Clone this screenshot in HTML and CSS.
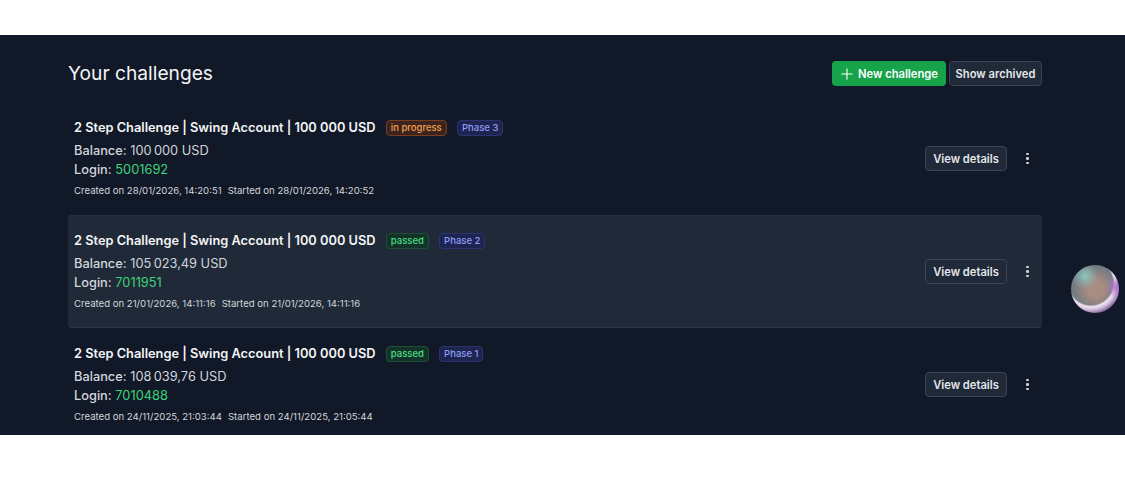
FILE: index.html
```html
<!DOCTYPE html>
<html lang="en">
<head>
  <meta charset="UTF-8" />
  <meta name="viewport" content="width=device-width, initial-scale=1.0"/>
  <title>Your challenges</title>
  <link rel="stylesheet" href="styles.css">
</head>
<body>
  <main class="panel">
    <header class="top">
      <h1>Your challenges</h1>
      <div class="top-actions">
        <button class="btn-new">
          <svg width="12" height="12" viewBox="0 0 12 12" fill="none" stroke="currentColor" stroke-width="1.1" stroke-linecap="round"><path d="M6 .8v10.4M.8 6h10.4"/></svg>
          New challenge
        </button>
        <button class="btn-dark btn-archived">Show archived</button>
      </div>
    </header>

    <section class="row">
      <div class="info">
        <div class="title">2 Step Challenge | Swing Account | 100 000 USD
          <span class="tag tag-orange">in progress</span>
          <span class="tag tag-blue">Phase 3</span>
        </div>
        <div class="line"><b>Balance:</b> 100&#8239;000 USD</div>
        <div class="line"><b>Login:</b> <span class="login">5001692</span></div>
        <div class="dates"><span>Created on 28/01/2026, 14:20:51</span><span>Started on 28/01/2026, 14:20:52</span></div>
      </div>
      <button class="btn-dark">View details</button>
      <button class="more" aria-label="More"><i></i><i></i><i></i></button>
    </section>

    <section class="row row-hover">
      <div class="info">
        <div class="title">2 Step Challenge | Swing Account | 100 000 USD
          <span class="tag tag-green">passed</span>
          <span class="tag tag-blue">Phase 2</span>
        </div>
        <div class="line"><b>Balance:</b> 105&#8239;023,49 USD</div>
        <div class="line"><b>Login:</b> <span class="login">7011951</span></div>
        <div class="dates"><span>Created on 21/01/2026, 14:11:16</span><span>Started on 21/01/2026, 14:11:16</span></div>
      </div>
      <button class="btn-dark">View details</button>
      <button class="more" aria-label="More"><i></i><i></i><i></i></button>
    </section>

    <section class="row">
      <div class="info">
        <div class="title">2 Step Challenge | Swing Account | 100 000 USD
          <span class="tag tag-green">passed</span>
          <span class="tag tag-blue">Phase 1</span>
        </div>
        <div class="line"><b>Balance:</b> 108&#8239;039,76 USD</div>
        <div class="line"><b>Login:</b> <span class="login">7010488</span></div>
        <div class="dates"><span>Created on 24/11/2025, 21:03:44</span><span>Started on 24/11/2025, 21:05:44</span></div>
      </div>
      <button class="btn-dark">View details</button>
      <button class="more" aria-label="More"><i></i><i></i><i></i></button>
    </section>

    <div class="bubble"></div>
  </main>
</body>
</html>
```
FILE: styles.css
```css
body {
  margin: 0;
  background: #fff;
  font-family: Inter, "Liberation Sans", sans-serif;
}

.panel {
  position: relative;
  height: 400px;
  margin-top: 35px;
  padding: 0 83px 0 68px;
  background: #111827;
  overflow: hidden;
}

.top {
  display: flex;
  align-items: center;
  justify-content: space-between;
  padding: 26px 0 16px;
  height: 25px;
}

h1 {
  margin: 0 0 2px;
  font-size: 19.2px;
  font-weight: 400;
  color: #f3f4f6;
}

.top-actions {
  display: flex;
  gap: 3px;
}

button {
  font-family: inherit;
  font-size: 11.2px;
  font-weight: 600;
  height: 25px;
  border-radius: 4px;
  cursor: pointer;
}

.btn-new {
  display: flex;
  align-items: center;
  gap: 5px;
  width: 114px;
  padding: 0 0 0 9px;
  border: none;
  background: #16a34a;
  color: #fff;
}

.btn-dark {
  width: 82px;
  padding: 0;
  border: 1px solid #3a4454;
  background: #1f2937;
  color: #e5e7eb;
}

.btn-archived {
  width: 93px;
}

.row {
  display: flex;
  align-items: center;
  height: 113px;
  box-sizing: border-box;
  padding: 0 4px 0 6px;
  border-radius: 4px;
}

.row-hover {
  background: #1f2937;
  border-top: 1px solid #273141;
  border-bottom: 1px solid #2c3748;
}

.info {
  flex: 1;
  padding-bottom: 1px;
}

.title {
  font-size: 12.8px;
  font-weight: 600;
  line-height: 20px;
  color: #f3f4f6;
  margin-bottom: 3px;
}

.tag {
  display: inline-block;
  box-sizing: border-box;
  height: 16px;
  margin-left: 7px;
  padding: 0 4px;
  border: 1px solid;
  border-radius: 4px;
  font-size: 9.5px;
  font-weight: 500;
  line-height: 14px;
  vertical-align: 1px;
}

.tag-orange {
  color: #f59e4c;
  background: #3b2420;
  border-color: #7c3d1e;
}

.tag-green {
  color: #4ade80;
  background: #13332a;
  border-color: #1f5138;
}

.tag-blue {
  color: #8f9cf5;
  background: #1e2450;
  border-color: #2c3370;
}

.line {
  font-size: 12.8px;
  line-height: 19px;
  color: #d1d5db;
}

.line b {
  font-weight: 500;
}

.login {
  color: #3dd47a;
}

.dates {
  display: flex;
  gap: 6px;
  margin-top: 4px;
  font-size: 9.6px;
  line-height: 16px;
  color: #d1d5db;
}

.more {
  display: flex;
  flex-direction: column;
  align-items: center;
  justify-content: center;
  gap: 2px;
  width: 21px;
  margin-left: 10px;
  padding: 0;
  border: none;
  background: none;
}

.more i {
  width: 2.5px;
  height: 2.5px;
  border-radius: 50%;
  background: #d1d5db;
}

/* floating assistant orb */
.bubble {
  position: absolute;
  left: 1071px;
  top: 230px;
  width: 48px;
  height: 48px;
  border-radius: 50%;
  background:
    radial-gradient(circle 12px at 46px 22px, rgba(170, 110, 205, .95), rgba(170, 110, 205, 0)),
    radial-gradient(circle 32px at 20px 18px, rgba(240, 232, 244, 0) 0 68%, #efe6f2 74%, #d9c3e0 82%, #6c4f88 100%),
    radial-gradient(circle 13px at 14px 11px, #8ec6bd, rgba(142, 198, 189, 0)),
    radial-gradient(circle 22px at 25px 24px, #a98c82 35%, rgba(169, 140, 130, 0)),
    #737c82;
}
```
